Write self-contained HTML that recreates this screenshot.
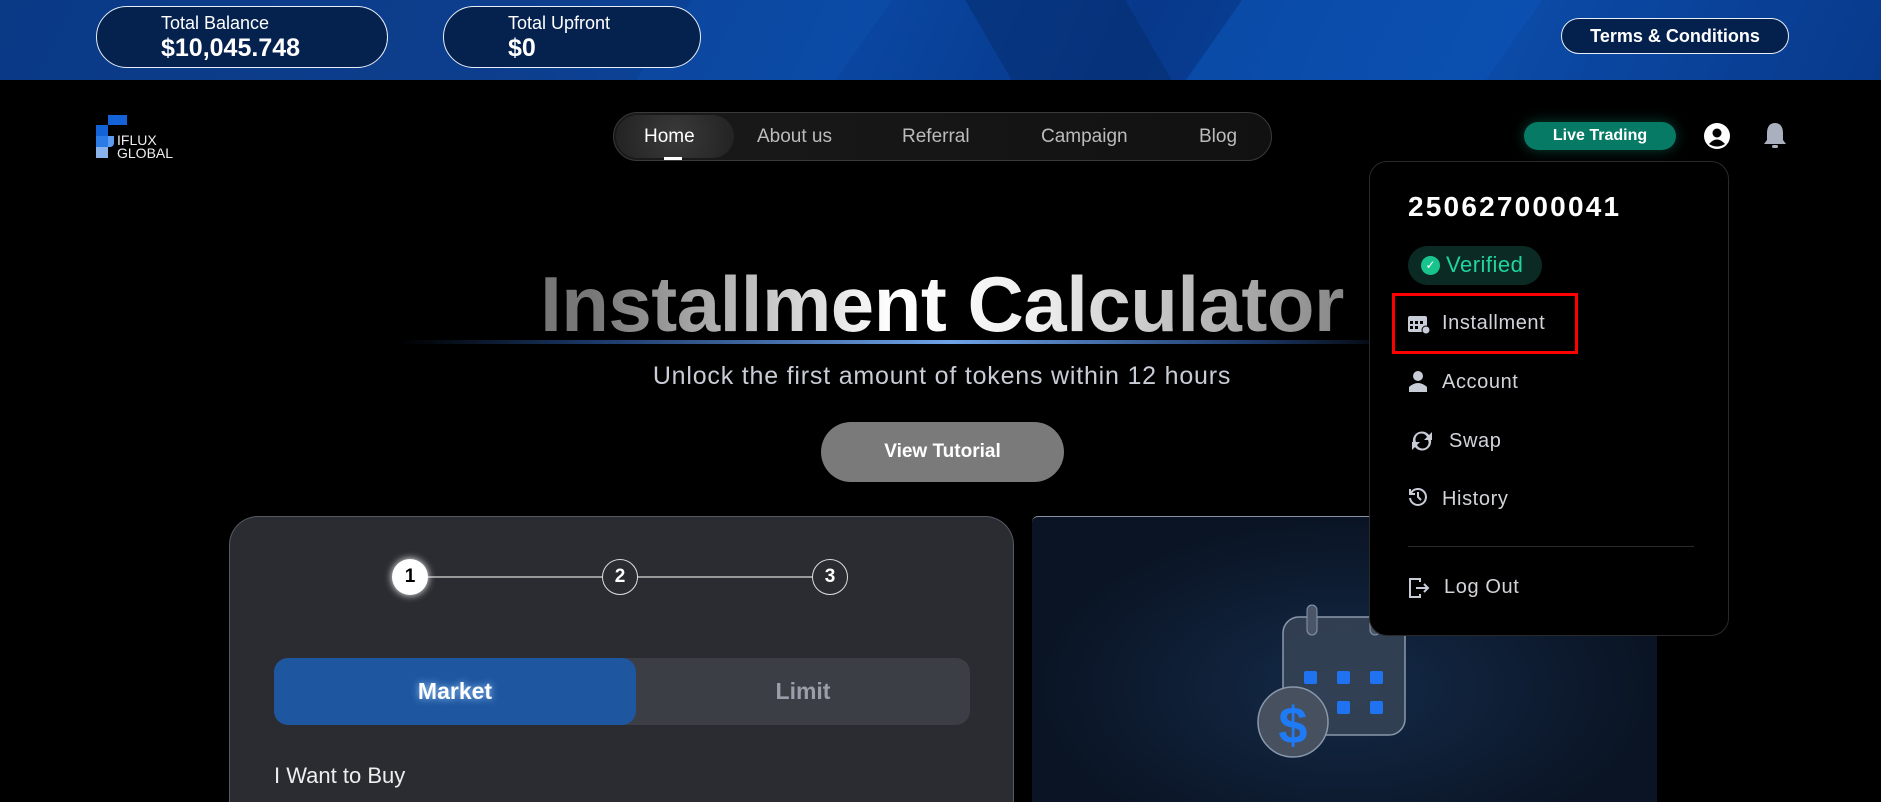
<!DOCTYPE html>
<html><head><meta charset="utf-8"><style>
*{margin:0;padding:0;box-sizing:border-box}
html,body{width:1881px;height:802px;overflow:hidden}
body{background:#000;font-family:"Liberation Sans",sans-serif;color:#fff;position:relative}
.abs{position:absolute}
.top{left:0;top:0;width:1881px;height:80px;background:linear-gradient(115deg,#0a3a86 0%,#0d3f8f 30%,#0a47a2 45%,#07388a 60%,#0b4aa6 80%,#083a8c 100%);overflow:hidden}
.pill{border:1.5px solid #e8eef8;border-radius:32px;background:#05224f}
.nav{left:613px;top:112px;width:659px;height:49px;border:1px solid #3a3a3a;border-radius:25px;background:linear-gradient(90deg,#1a1a1a,#111)}
.nav span{position:absolute;top:13px;font-size:19px;color:#bbb}
.menu{left:1369px;top:161px;width:360px;height:475px;background:#000;border:1px solid #2a2a2a;border-radius:18px}
.mi{position:absolute;left:72px;font-size:20px;letter-spacing:.6px;color:#d2d4da}
.ic{position:absolute;left:38px}
</style></head><body>
<div class="abs top">
<div class="abs" style="left:1200px;top:-40px;width:300px;height:200px;background:#0c55b8;transform:skewX(-35deg);opacity:.6"></div>
<div class="abs" style="left:1000px;top:-40px;width:160px;height:200px;background:#062e72;transform:skewX(30deg);opacity:.6"></div>
<div class="abs" style="left:650px;top:-20px;width:200px;height:160px;background:#0b4eaa;transform:skewX(-35deg);opacity:.5"></div>
</div>
<div class="abs pill" style="left:96px;top:6px;width:292px;height:62px"></div>
<div class="abs" style="left:161px;top:13px;font-size:18px">Total Balance</div>
<div class="abs" style="left:161px;top:34px;font-size:25px;font-weight:bold">$10,045.748</div>
<div class="abs pill" style="left:443px;top:6px;width:258px;height:62px"></div>
<div class="abs" style="left:508px;top:13px;font-size:18px">Total Upfront</div>
<div class="abs" style="left:508px;top:34px;font-size:25px;font-weight:bold">$0</div>
<div class="abs pill" style="left:1561px;top:18px;width:228px;height:36px;background:#04214d"></div>
<div class="abs" style="left:1561px;top:26px;width:228px;text-align:center;font-size:18px;font-weight:bold">Terms &amp; Conditions</div>

<!-- logo -->
<div class="abs" style="left:108px;top:115px;width:19px;height:10px;background:#1463d6"></div>
<div class="abs" style="left:96px;top:125px;width:12px;height:11px;background:#1463d6"></div>
<div class="abs" style="left:96px;top:136px;width:12px;height:11px;background:#2b7be6"></div>
<div class="abs" style="left:96px;top:147px;width:12px;height:11px;background:#8ab3ee"></div>
<div class="abs" style="left:108px;top:136px;width:6px;height:11px;background:#5d9cf0;border-radius:0 0 4px 0"></div>
<div class="abs" style="left:117px;top:134px;font-size:14px;line-height:13px;color:#eee">IFLUX<br>GLOBAL</div>

<div class="abs nav">
<div class="abs" style="left:2px;top:2px;width:118px;height:43px;border-radius:22px;background:radial-gradient(circle,#3a3a3a,#222)"></div>
<span style="left:30px;color:#fff">Home</span><div class="abs" style="left:50px;top:44px;width:18px;height:3px;background:#fff"></div>
<span style="left:143px">About us</span><span style="left:288px">Referral</span><span style="left:427px">Campaign</span><span style="left:585px">Blog</span>
</div>

<div class="abs" style="left:1524px;top:122px;width:152px;height:28px;border-radius:14px;background:#077a66;box-shadow:0 0 14px rgba(20,160,130,.4);text-align:center;font-size:16px;font-weight:bold;line-height:28px">Live Trading</div>
<svg class="abs" style="left:1703px;top:122px" width="28" height="28" viewBox="0 0 28 28"><circle cx="14" cy="14" r="13" fill="#fff"/><circle cx="14" cy="11" r="4.5" fill="#000"/><path d="M6 22 Q14 13 22 22 Q14 27 6 22Z" fill="#000"/></svg>
<svg class="abs" style="left:1762px;top:121px" width="26" height="30" viewBox="0 0 26 30"><path d="M13 2 C7 2 5 7 5 12 L5 19 L2 23 L24 23 L21 19 L21 12 C21 7 19 2 13 2Z" fill="#aab0be"/><rect x="10" y="24" width="6" height="3" rx="1.5" fill="#aab0be"/></svg>

<!-- title -->
<div class="abs" style="left:400px;top:340px;width:1000px;height:4px;background:linear-gradient(90deg,transparent,#1c3a6a 20%,#6fa2e6 55%,#1c3a6a 85%,transparent)"></div>
<div class="abs" style="left:442px;top:264px;width:1000px;text-align:center;font-size:78px;font-weight:bold;letter-spacing:-0.5px;background:linear-gradient(90deg,#777 15%,#fff 45%,#eee 60%,#888 90%);-webkit-background-clip:text;color:transparent;line-height:80px">Installment Calculator</div>
<div class="abs" style="left:442px;top:362px;width:1000px;text-align:center;font-size:25px;letter-spacing:.8px;color:#c8ccd6">Unlock the first amount of tokens within 12 hours</div>
<div class="abs" style="left:821px;top:422px;width:243px;height:60px;border-radius:30px;background:#7a7a7a;text-align:center;line-height:60px;font-size:19px;font-weight:bold">View Tutorial</div>

<!-- left card -->
<div class="abs" style="left:229px;top:516px;width:785px;height:286px;border-radius:29px 29px 0 0;background:#2a2c31;border:1px solid #555a62;border-bottom:none"></div>
<div class="abs" style="left:428px;top:576px;width:400px;height:2px;background:#999"></div>
<div class="abs" style="left:392px;top:559px;width:36px;height:36px;border-radius:50%;background:#fff;color:#000;font-weight:bold;text-align:center;line-height:36px;font-size:19px;box-shadow:0 0 8px #fff">1</div>
<div class="abs" style="left:602px;top:559px;width:36px;height:36px;border-radius:50%;background:#2a2c31;border:1.5px solid #ddd;font-weight:bold;text-align:center;line-height:33px;font-size:19px">2</div>
<div class="abs" style="left:812px;top:559px;width:36px;height:36px;border-radius:50%;background:#2a2c31;border:1.5px solid #ddd;font-weight:bold;text-align:center;line-height:33px;font-size:19px">3</div>
<div class="abs" style="left:274px;top:658px;width:696px;height:67px;border-radius:14px;background:#3b3e45"></div>
<div class="abs" style="left:274px;top:658px;width:362px;height:67px;border-radius:14px;background:#1e56a0;text-align:center;line-height:67px;font-size:23px;font-weight:bold;text-shadow:0 0 8px #9cf">Market</div>
<div class="abs" style="left:636px;top:658px;width:334px;text-align:center;line-height:67px;font-size:23px;font-weight:bold;color:#9a9ea8">Limit</div>
<div class="abs" style="left:274px;top:763px;font-size:22px;color:#eee">I Want to Buy</div>

<!-- right card -->
<div class="abs" style="left:1032px;top:516px;width:625px;height:286px;border-radius:6px 6px 0 0;border-top:1px solid #8892a0;background:radial-gradient(ellipse at 50% 60%,#142a48,#0a1424 70%)"></div>
<svg class="abs" style="left:1240px;top:590px" width="190" height="170" viewBox="1240 590 190 170">
<rect x="1283" y="617" width="122" height="118" rx="16" fill="#3a4658" fill-opacity=".8" stroke="#8a98ac" stroke-width="1.5"/>
<rect x="1307" y="605" width="10" height="30" rx="5" fill="#4a5668" stroke="#8a98ac"/>
<rect x="1370" y="605" width="10" height="30" rx="5" fill="#4a5668" stroke="#8a98ac"/>
<g fill="#1f73f0"><rect x="1304" y="671" width="13" height="13" rx="2"/><rect x="1337" y="671" width="13" height="13" rx="2"/><rect x="1370" y="671" width="13" height="13" rx="2"/><rect x="1337" y="701" width="13" height="13" rx="2"/><rect x="1370" y="701" width="13" height="13" rx="2"/></g>
<circle cx="1293" cy="722" r="35" fill="#46505e" stroke="#8a98ac" stroke-width="1.5"/>
<text x="1293" y="743" text-anchor="middle" font-family="Liberation Sans" font-weight="bold" font-size="52" fill="#1f7af5">$</text>
</svg>

<!-- dropdown -->
<div class="abs menu">
<div class="abs" style="left:38px;top:29px;font-size:28px;font-weight:bold;letter-spacing:2.2px">250627000041</div>
<div class="abs" style="left:38px;top:84px;width:134px;height:39px;border-radius:20px;background:#0c2a24"></div>
<div class="abs" style="left:51px;top:94px;width:19px;height:19px;border-radius:50%;background:#19c48c;color:#fff;font-size:12px;text-align:center;line-height:19px">✓</div>
<div class="abs" style="left:76px;top:90px;font-size:22px;letter-spacing:.5px;color:#1fd4a0">Verified</div>
<div class="abs" style="left:22px;top:131px;width:186px;height:61px;border:3px solid #f00"></div>
<svg class="ic" style="top:152px" width="22" height="20" viewBox="0 0 22 20"><rect x="0" y="2" width="19" height="16" rx="2" fill="#c8ccd6"/><g fill="#000"><rect x="2" y="7" width="3" height="3"/><rect x="7" y="7" width="3" height="3"/><rect x="12" y="7" width="3" height="3"/><rect x="2" y="12" width="3" height="3"/><rect x="7" y="12" width="3" height="3"/></g><circle cx="18" cy="16" r="4" fill="#c8ccd6" stroke="#000"/></svg>
<div class="mi" style="top:150px">Installment</div>
<svg class="ic" style="top:208px" width="20" height="22" viewBox="0 0 20 22"><circle cx="10" cy="6" r="5" fill="#c8ccd6"/><path d="M1 22 L1 17 Q10 9 19 17 L19 22Z" fill="#c8ccd6"/></svg>
<div class="mi" style="top:209px">Account</div>
<svg class="ic" style="top:267px" width="28" height="24" viewBox="0 0 28 24"><path d="M5 13 A9 9 0 0 1 21 6 L24 3 L24 11 L16 11 L19 8 A6 6 0 0 0 8 13Z M23 11 A9 9 0 0 1 7 18 L4 21 L4 13 L12 13 L9 16 A6 6 0 0 0 20 11Z" fill="#c8ccd6"/></svg>
<div class="mi" style="top:268px;left:79px">Swap</div>
<svg class="ic" style="top:325px" width="20" height="20" viewBox="0 0 20 20" fill="none" stroke="#c8ccd6" stroke-width="2"><path d="M3 6 A8 8 0 1 1 2 11"/><path d="M2 2 L2 7 L7 7"/><path d="M10 5 L10 10 L13 13"/></svg>
<div class="mi" style="top:326px">History</div>
<div class="abs" style="left:38px;top:384px;width:286px;height:1px;background:#2a2a2a"></div>
<svg class="ic" style="top:415px" width="22" height="22" viewBox="0 0 22 22" fill="none" stroke="#c8ccd6" stroke-width="2"><path d="M12 5 L12 2 L2 2 L2 20 L12 20 L12 17"/><path d="M8 11 L20 11 M16 7 L20 11 L16 15"/></svg>
<div class="mi" style="top:414px;left:74px">Log Out</div>
</div>
</body></html>
